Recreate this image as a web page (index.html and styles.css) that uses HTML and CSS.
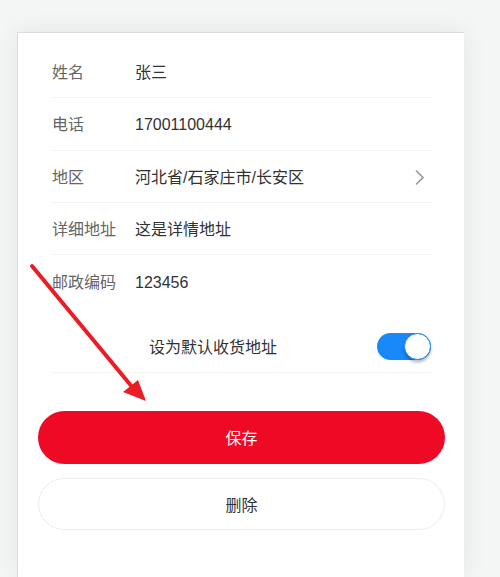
FILE: index.html
```html
<!DOCTYPE html>
<html lang="zh">
<head>
<meta charset="utf-8">
<link rel="stylesheet" href="styles.css">
</head>
<body>
<div class="card">
  <div class="form">
    <div class="row"><span class="label">姓名</span><span class="value">张三</span></div>
    <div class="row"><span class="label">电话</span><span class="value">17001100444</span></div>
    <div class="row"><span class="label">地区</span><span class="value">河北省/石家庄市/长安区</span>
      <svg class="chev" width="12" height="18" viewBox="0 0 12 18"><polyline points="2,1.5 9,8.5 2,15.5" fill="none" stroke="#969799" stroke-width="1.6"/></svg>
    </div>
    <div class="row"><span class="label">详细地址</span><span class="value">这是详情地址</span></div>
    <div class="row last"><span class="label">邮政编码</span><span class="value">123456</span></div>
    <div class="row switch-row"><span class="switch-text">设为默认收货地址</span>
      <div class="switch"><div class="knob"></div></div>
    </div>
  </div>
  <div class="buttons">
    <button class="btn save">保存</button>
    <button class="btn del">删除</button>
  </div>
</div>
<svg class="arrow" width="500" height="577" viewBox="0 0 500 577">
  <line x1="32" y1="266" x2="133" y2="388" stroke="#ec1c24" stroke-width="4" stroke-linecap="round"/>
  <polygon points="146,401 123,392 138,380" fill="#ec1c24"/>
</svg>
</body>
</html>
```

FILE: styles.css
```css
html, body {
  margin: 0;
  padding: 0;
}
body {
  background: #f4f5f5;
  width: 500px;
  height: 577px;
  overflow: hidden;
  position: relative;
  font-family: "Liberation Sans", "Noto Sans CJK SC", sans-serif;
}
.card {
  margin: 32px 0 0 17px;
  width: 446px;
  height: 531px;
  background: #fff;
  border-top: 1px solid #dcdcdc;
  border-left: 1px solid #dcdcdc;
  box-shadow: 0 0 24px rgba(0, 0, 0, 0.07);
  padding-top: 13px;
  box-sizing: content-box;
}
.form {
  padding: 0 32px 0 34px;
}
.row {
  display: flex;
  align-items: center;
  height: 52.33px;
  box-sizing: border-box;
  border-bottom: 1px solid #f2f3f5;
  font-size: 16px;
  line-height: 22px;
  padding-top: 3px;
}
.row.last {
  border-bottom: none;
}
.label {
  width: 83px;
  color: #646566;
  flex: none;
  height: 22px;
}
.value {
  color: #323233;
  flex: 1;
  height: 22px;
}
.chev {
  margin-right: 6px;
}
.switch-row {
  margin-top: 13px;
  height: 52px;
  padding-left: 97px;
}
.switch-text {
  color: #323233;
  flex: 1;
}
.switch {
  width: 54px;
  height: 27px;
  border-radius: 14px;
  background: #1989fa;
  position: relative;
  flex: none;
  margin-right: 1px;
  margin-top: -2px;
}
.knob {
  position: absolute;
  top: 0;
  right: 0;
  width: 27px;
  height: 27px;
  border-radius: 50%;
  background: #fff;
  box-sizing: border-box;
  border: 1px solid #1989fa;
  box-shadow: 0 3px 1px 0 rgba(0,0,0,.06), 0 2px 3px 0 rgba(0,0,0,.14), 0 3px 4px 0 rgba(0,0,0,.08);
}
.buttons {
  display: flex;
  flex-direction: column;
  gap: 14px;
  margin: 38px 19px 0 20px;
}
.btn {
  font-family: "Liberation Sans", "Noto Sans CJK SC", sans-serif;
  font-size: 16px;
  border-radius: 27px;
  width: 100%;
}
.save {
  height: 53px;
  background: #ee0a24;
  color: #fff;
  border: none;
}
.del {
  height: 52px;
  background: #fff;
  color: #323233;
  border: 1px solid #ebedf0;
}
.arrow {
  position: absolute;
  left: 0;
  top: 0;
  pointer-events: none;
}
```
